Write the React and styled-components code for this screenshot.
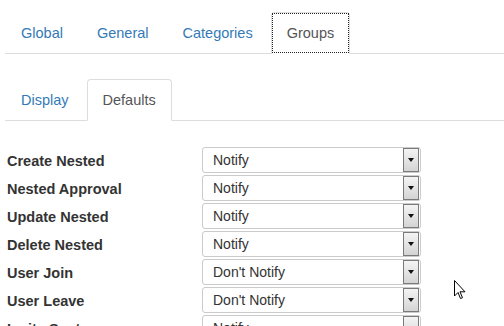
import React from "react";
import styled, { createGlobalStyle } from "styled-components";

const Global = createGlobalStyle`
  html, body { margin: 0; padding: 0; background: #fff; }
  body {
    font-family: "Liberation Sans", Arial, sans-serif;
    color: #333;
    overflow: hidden;
  }
`;

const Page = styled.div`
  position: relative;
  padding: 12px 0 0 5px;
`;

const Tabs = styled.ul`
  display: flex;
  list-style: none;
  margin: ${(p) => p.$top || 0}px 0 0 0;
  padding: 0;
  border-bottom: 1px solid #ddd;
`;

const Tab = styled.li`
  position: relative;
  margin: 0 2px -1px 0;
  padding: 10px 15px;
  line-height: 20px;
  font-size: 14.5px;
  border: 1px solid ${(p) => (p.$active ? "#ddd" : "transparent")};
  border-bottom-color: transparent;
  border-radius: 4px 4px 0 0;
  background: ${(p) => (p.$active ? "#fff" : "transparent")};
  color: ${(p) => (p.$active ? "#555" : "#337ab7")};
  cursor: pointer;
  &::after {
    content: "";
    display: ${(p) => (p.$focus ? "block" : "none")};
    position: absolute;
    inset: 0;
    border: 1px dotted #222;
  }
`;

const Form = styled.div`
  margin-top: 26px;
  display: grid;
  grid-template-columns: 197px 219px;
  row-gap: 2px;
`;

const Label = styled.div`
  padding: 2px 0 0 2px;
  box-sizing: border-box;
  height: 26px;
  display: flex;
  align-items: center;
  font-weight: bold;
  font-size: 14.5px;
  color: #333;
`;

const Select = styled.div`
  height: 26px;
  box-sizing: border-box;
  border: 1px solid #cbcbcb;
  border-radius: 3px;
  display: flex;
  align-items: stretch;
  padding: 0 1px 0 10px;
  font-size: 14px;
  color: #333;
  background: #fff;
`;

const Value = styled.span`
  flex: 1;
  display: flex;
  align-items: center;
`;

const Arrow = styled.span`
  width: 16px;
  box-sizing: border-box;
  border: 1px solid #7a7a7a;
  background: linear-gradient(#f4f4f4, #d4d4d4);
  display: flex;
  align-items: center;
  justify-content: center;
  &::before {
    content: "";
    border-left: 3.5px solid transparent;
    border-right: 3.5px solid transparent;
    border-top: 4px solid #111;
  }
`;

const Cursor = styled.svg`
  position: absolute;
  left: 454px;
  top: 280px;
`;

const rows = [
  ["Create Nested", "Notify"],
  ["Nested Approval", "Notify"],
  ["Update Nested", "Notify"],
  ["Delete Nested", "Notify"],
  ["User Join", "Don't Notify"],
  ["User Leave", "Don't Notify"],
  ["Invite Sent", "Notify"],
];

export default function App() {
  return (
    <Page>
      <Global />
      <Tabs>
        <Tab>Global</Tab>
        <Tab>General</Tab>
        <Tab>Categories</Tab>
        <Tab $active $focus>Groups</Tab>
      </Tabs>
      <Tabs $top={25}>
        <Tab>Display</Tab>
        <Tab $active>Defaults</Tab>
      </Tabs>
      <Form>
        {rows.map(([label, value]) => (
          <React.Fragment key={label}>
            <Label>{label}</Label>
            <Select>
              <Value>{value}</Value>
              <Arrow />
            </Select>
          </React.Fragment>
        ))}
      </Form>
      <Cursor width="13" height="20" viewBox="0 0 13 20">
        <path
          d="M0.5 0.5 L0.5 16 L4 12.5 L6.5 18.5 L8.5 17.7 L6 11.8 L11 11.8 Z"
          fill="#fff"
          stroke="#000"
          strokeWidth="1"
        />
      </Cursor>
    </Page>
  );
}
